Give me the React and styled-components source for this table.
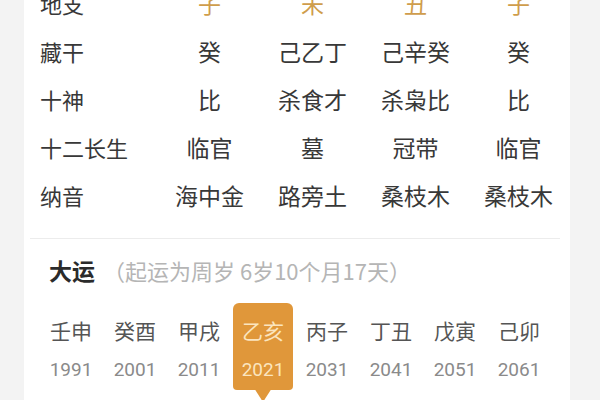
import React from "react";
import styled, { createGlobalStyle } from "styled-components";

const GlobalStyle = createGlobalStyle`
  html, body {
    margin: 0;
    padding: 0;
    background: #f3f3f3;
    overflow: hidden;
  }
  body {
    font-family: "Noto Sans CJK SC", "Noto Sans", sans-serif;
  }
`;

const rows = [
  { label: "地支", values: ["子", "未", "丑", "子"], gold: true },
  { label: "藏干", values: ["癸", "己乙丁", "己辛癸", "癸"] },
  { label: "十神", values: ["比", "杀食才", "杀枭比", "比"] },
  { label: "十二长生", values: ["临官", "墓", "冠带", "临官"] },
  { label: "纳音", values: ["海中金", "路旁土", "桑枝木", "桑枝木"] },
];

const dayun = [
  ["壬申", "1991"],
  ["癸酉", "2001"],
  ["甲戌", "2011"],
  ["乙亥", "2021"],
  ["丙子", "2031"],
  ["丁丑", "2041"],
  ["戊寅", "2051"],
  ["己卯", "2061"],
];

export default function App() {
  return (
    <Page>
      <GlobalStyle />
      <Card>
        <Table>
          {rows.map((r) => (
            <React.Fragment key={r.label}>
              <Label>{r.label}</Label>
              {r.values.map((v, i) => (
                <Value key={i} $gold={r.gold}>{v}</Value>
              ))}
            </React.Fragment>
          ))}
        </Table>
        <Divider />
        <Header>
          <Title>大运</Title>
          <Sub>（起运为周岁 6岁10个月17天）</Sub>
        </Header>
        <DayunRow>
          {dayun.map(([gz, year]) => (
            <DayunCell key={year} $active={year === "2021"}>
              <GanZhi>{gz}</GanZhi>
              <Year $active={year === "2021"}>{year}</Year>
            </DayunCell>
          ))}
        </DayunRow>
      </Card>
    </Page>
  );
}

const Page = styled.div`
  width: 600px;
  height: 400px;
  padding: 0 30px 0 24px;
  box-sizing: border-box;
  overflow: hidden;
`;

const Card = styled.div`
  background: #fff;
  margin-top: -21px;
  height: 460px;
`;

const Table = styled.div`
  display: grid;
  grid-template-columns: 118px repeat(4, 103px);
  grid-auto-rows: 48px;
  padding-left: 16px;
  align-items: center;
`;

const Label = styled.div`
  font-size: 22px;
  color: #383838;
  white-space: nowrap;
`;

const Value = styled.div`
  font-size: 23px;
  text-align: center;
  white-space: nowrap;
  color: ${(p) => (p.$gold ? "#cf9d4c" : "#383838")};
`;

const Divider = styled.div`
  height: 1px;
  background: #ececec;
  margin: 19px 10px 0 6px;
  box-shadow: 0 -6px 8px rgba(0, 0, 0, 0.02);
`;

const Header = styled.div`
  display: flex;
  align-items: center;
  height: 30px;
  margin-top: 16px;
  padding-left: 25px;
`;

const Title = styled.div`
  font-size: 23px;
  font-weight: 700;
  color: #2b2b2b;
`;

const Sub = styled.div`
  font-size: 22px;
  color: #b5b5b5;
  margin-left: 8px;
  white-space: nowrap;
`;

const DayunRow = styled.div`
  display: grid;
  grid-template-columns: repeat(8, 64px);
  margin-top: 18px;
  padding-left: 15px;
`;

const DayunCell = styled.div`
  position: relative;
  display: flex;
  flex-direction: column;
  align-items: center;
  margin: 0 2px;
  padding: 14px 0 9px;
  gap: 16px;
  border-radius: 6px 6px 4px 4px;
  background: ${(p) => (p.$active ? "#e0973a" : "transparent")};
  color: ${(p) => (p.$active ? "#fbe5bf" : "#555")};

  &::after {
    content: "";
    display: ${(p) => (p.$active ? "block" : "none")};
    position: absolute;
    left: 50%;
    bottom: -12px;
    width: 18px;
    height: 14px;
    margin-left: -9px;
    background: #e0973a;
    clip-path: polygon(0 0, 100% 0, 50% 100%);
  }
`;

const GanZhi = styled.div`
  font-size: 21px;
  line-height: 26px;
  white-space: nowrap;
`;

const Year = styled.div`
  font-family: "Roboto", "Noto Sans", sans-serif;
  font-size: 19px;
  line-height: 22px;
  color: ${(p) => (p.$active ? "#fbe5bf" : "#8a8a8a")};
`;
